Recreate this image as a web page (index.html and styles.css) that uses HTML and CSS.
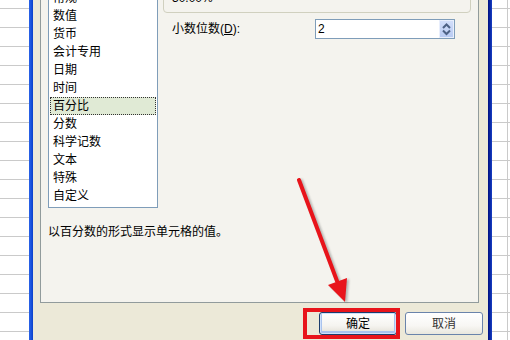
FILE: index.html
```html
<!DOCTYPE html>
<html lang="zh-CN">
<head>
<meta charset="utf-8">
<title>设置单元格格式</title>
<link rel="stylesheet" href="styles.css">
</head>
<body>
<div class="screen">
  <div class="sheet sheet-left"></div>
  <div class="frame frame-left"></div>
  <div class="dialog">
    <div class="panel">
      <div class="top">
        <ul class="list">
          <li>常规</li>
          <li>数值</li>
          <li>货币</li>
          <li>会计专用</li>
          <li>日期</li>
          <li>时间</li>
          <li class="sel">百分比</li>
          <li>分数</li>
          <li>科学记数</li>
          <li>文本</li>
          <li>特殊</li>
          <li>自定义</li>
        </ul>
        <div class="opts">
          <div class="sample">30.00%</div>
          <div class="row">
            <span class="lbl">小数位数(<u>D</u>):</span>
            <div class="spin-input">
              <span class="val">2</span>
              <span class="spin">
                <svg width="13" height="16" viewBox="0 0 13 16">
                  <path d="M3 7 L6.5 3.5 L10 7" fill="none" stroke="#4d6185" stroke-width="2"/>
                  <path d="M3 9.5 L6.5 13 L10 9.5" fill="none" stroke="#4d6185" stroke-width="2"/>
                </svg>
              </span>
            </div>
          </div>
        </div>
      </div>
      <p class="desc">以百分数的形式显示单元格的值。</p>
    </div>
    <div class="buttons">
      <button class="btn btn-default">确定</button>
      <button class="btn btn-cancel">取消</button>
    </div>
  </div>
  <div class="frame frame-right"></div>
  <div class="sheet sheet-right"></div>
  <svg class="annot" width="510" height="340" viewBox="0 0 510 340">
    <g class="arrow">
      <line x1="299" y1="180" x2="337" y2="281" stroke="#e8141b" stroke-width="4" stroke-linecap="round"/>
      <polygon points="345,302 328,285 347,278" fill="#e8141b"/>
    </g>
    <rect x="305" y="310" width="93" height="27" fill="none" stroke="#e8141b" stroke-width="4"/>
  </svg>
</div>
</body>
</html>
```

FILE: styles.css
```css
* { box-sizing: border-box; }
html, body { margin: 0; padding: 0; }
body {
  width: 510px;
  height: 340px;
  overflow: hidden;
  font-family: "Liberation Sans", "Noto Sans CJK SC", sans-serif;
  font-size: 12px;
  color: #000;
  background: #fff;
}
.screen {
  position: relative;
  display: flex;
  width: 510px;
  height: 340px;
  overflow: hidden;
}
.sheet {
  background-color: #fff;
  background-image: linear-gradient(#cacaca 1px, transparent 1px);
  background-size: 100% 19px;
  background-position: 0 8px;
}
.sheet-left { width: 29px; flex: none; }
.sheet-right {
  width: 18px;
  flex: none;
  background-image:
    linear-gradient(#cacaca 1px, transparent 1px),
    linear-gradient(90deg, transparent 15px, #cacaca 15px, #cacaca 16px, transparent 16px);
  background-size: 100% 19px, 100% 100%;
  background-position: 0 8px, 0 0;
}
.frame { width: 4px; flex: none; }
.frame-left { background: linear-gradient(90deg, #2a62e6, #1a55df 50%, #0a3fc8); }
.frame-right { background: linear-gradient(90deg, #001080, #0a2aa8 60%, #1a3fc4); }

.dialog {
  width: 455px;
  flex: none;
  background: #ece9d8;
  display: flex;
  flex-direction: column;
  padding: 0 9px 0 7px;
}
.panel {
  height: 323px;
  margin-top: -20px;
  border: 1px solid #919b9c;
  background: #f4f3ee;
  padding: 6px 7px 0 7px;
  flex: none;
}
.top {
  display: flex;
  align-items: flex-start;
  gap: 5px;
}
.list {
  width: 110px;
  flex: none;
  margin: 0;
  padding: 1px 0 2px;
  list-style: none;
  border: 1px solid #7f9db9;
  background: #fff;
}
.list li {
  height: 18px;
  line-height: 18px;
  margin: 0 1px;
  padding-left: 3px;
  white-space: nowrap;
}
.list li.sel {
  background: #e0ead5;
  outline: 1px dotted #333;
  outline-offset: -1px;
}
.opts { flex: 1; }
.sample {
  border: 1px solid #d0d0bf;
  border-radius: 4px;
  padding: 3px 0 7px 8px;
  line-height: 14px;
}
.row {
  display: flex;
  align-items: center;
  margin-top: 6px;
}
.lbl {
  width: 143px;
  flex: none;
  margin-left: 9px;
  line-height: 16px;
}
.spin-input {
  width: 140px;
  height: 20px;
  flex: none;
  border: 1px solid #7f9db9;
  background: #fff;
  display: flex;
  justify-content: space-between;
}
.val {
  padding-left: 2px;
  line-height: 18px;
}
.spin {
  width: 15px;
  height: 18px;
  display: flex;
  align-items: center;
  justify-content: center;
  background: linear-gradient(#d2defa, #b9cbf3);
  border: 1px solid #e8eefc;
}
.spin svg { display: block; }
.desc {
  margin: 16px 0 0 0;
  line-height: 16px;
}
.buttons {
  display: flex;
  justify-content: flex-end;
  gap: 8px;
  margin-top: 9px;
  margin-right: -4px;
}
.btn {
  width: 78px;
  height: 23px;
  padding: 0;
  border: 1px solid #1c3d6c;
  border-radius: 3px;
  background: linear-gradient(#ffffff, #f5f4f0 60%, #e2dfd4);
  font-family: "Liberation Sans", "Noto Sans CJK SC", sans-serif;
  font-size: 12px;
  color: #000;
  line-height: 20px;
}
.btn-default {
  box-shadow: inset 0 0 0 1px #cfe0fb, inset 0 -1px 0 2px #a9c3ee;
}
.btn-cancel {
  border-color: #6a84ab;
  color: #333;
  background: linear-gradient(#ffffff, #f8f7f4 60%, #e9e7de);
}
.annot {
  position: absolute;
  left: 0;
  top: 0;
  pointer-events: none;
}
.arrow { filter: drop-shadow(2px 1px 1px rgba(60, 60, 60, 0.35)); }
```
